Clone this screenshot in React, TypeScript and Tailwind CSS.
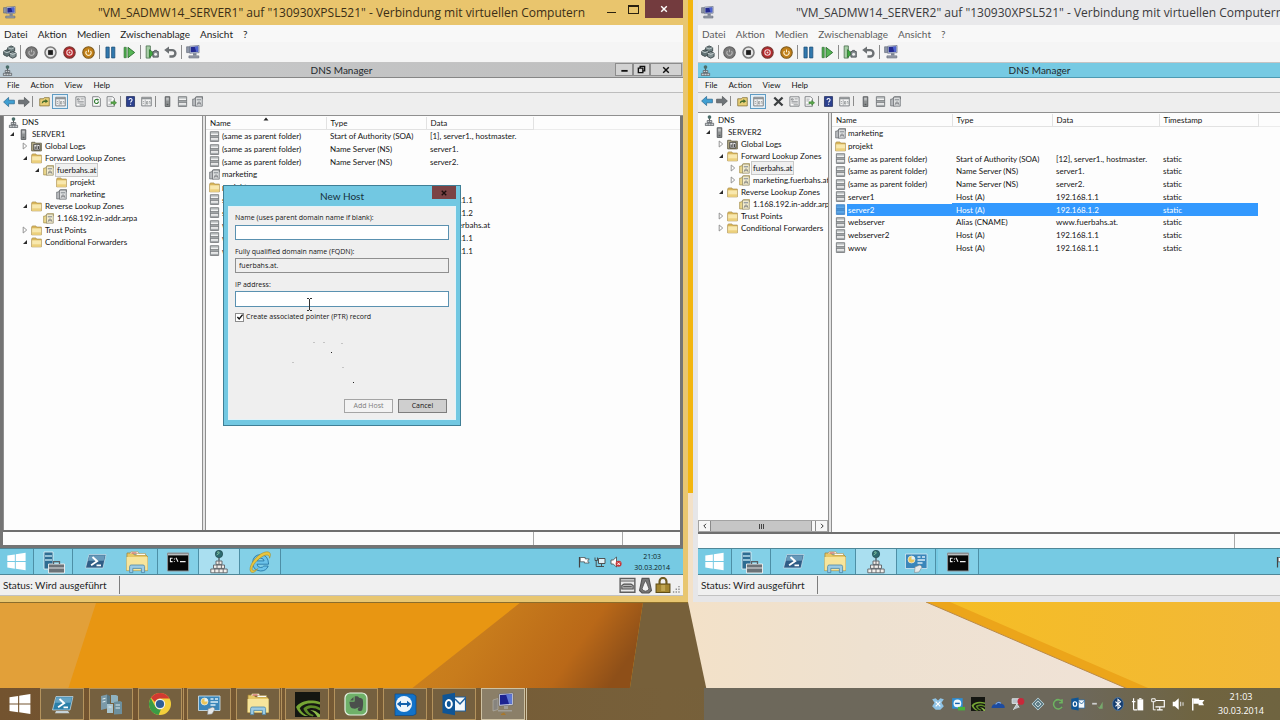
import type { ReactNode } from 'react';

/* ---------- small icons (12 x 12) ---------- */

function S({ children, size = 'size-[11px]' }: { children: ReactNode; size?: string }) {
  return (
    <svg viewBox="0 0 12 12" className={`${size} shrink-0`} aria-hidden="true">
      {children}
    </svg>
  );
}

function PcIcon({ size = 'size-[13px]' }: { size?: string }) {
  return (
    <S size={size}>
      <path d="M0.5 1.5h2.5v5H0.5z" fill="#8d96a8" stroke="#59606e" strokeWidth=".5" />
      <path d="M3.2 1l8-.6v6.2l-8 .5z" fill="#c9d2e4" stroke="#525c74" strokeWidth=".5" />
      <path d="M4 1.8l6.4-.5v4.500L4 6.300z" fill="#232a90" />
      <path d="M7.500 1.600l2.900-.3v4.500l-1.600.1z" fill="#4e63cf" />
      <path d="M6 7h3v2H6z" fill="#7c8596" />
      <path d="M2.500 9.300h8.500v1.800H2.500z" fill="#9aa1ad" stroke="#5a6170" strokeWidth=".5" />
    </S>
  );
}

function ServerTree() {
  return (
    <S size="size-[11px]">
      <circle cx="6" cy="2.300" r="2" fill="#4a6d6a" />
      <path d="M5.400 4h1.200v2H5.400z" fill="#555" />
      <path d="M3.500 6h5v2.200h-5zM1.500 9h9v2.600h-9z" fill="#c9cdcf" stroke="#555b60" strokeWidth=".8" />
      <path d="M6 6v2M4.500 9v2.500M7.500 9v2.500" stroke="#555b60" strokeWidth=".7" />
    </S>
  );
}

function Tower() {
  return (
    <S size="size-[11px]">
      <path d="M3.500.8h5v10.600h-5z" fill="#8e9192" stroke="#4d5052" strokeWidth=".9" />
      <path d="M4.600 2.500h2.800M4.600 4.200h2.800" stroke="#e1e3e4" strokeWidth=".9" />
      <path d="M5 8.500h2v1.500H5z" fill="#585b5c" />
    </S>
  );
}

function Folder() {
  return (
    <S size="size-[11px]">
      <path d="M.7 2.200L1.500 1h3.800l.9 1.200h5.100v8.600H.7z" fill="#d9b65a" stroke="#a8894a" strokeWidth=".7" />
      <path d="M1.200 3.600h9.700v6.800H1.200z" fill="#f8e8ae" />
      <path d="M1.200 8h9.700v2.400H1.200z" fill="#ecd07c" />
    </S>
  );
}

function Logs() {
  return (
    <S size="size-[11px]">
      <path d="M.7 1.400h3.600l.8 1h6.200v8.400H.7z" fill="#b9b08b" stroke="#5d5943" strokeWidth=".9" />
      <path d="M3 3.600h6.800v6.200H3z" fill="#e8e8e8" stroke="#333" strokeWidth=".9" />
      <path d="M4.600 8.800V6M6.400 8.800V4.800M8.200 8.800V5.600" stroke="#333" strokeWidth="1" />
    </S>
  );
}

function Zone({ grey = false }: { grey?: boolean }) {
  return (
    <S size="size-[11px]">
      <path d="M.7 3.400h2L3.400 2H5v8.800H.7z" fill={grey ? '#b9bcbf' : '#ecd98e'} stroke={grey ? '#6b6f73' : '#a48f4d'} strokeWidth=".8" />
      <path d="M3.800 1.200h7.400v9.900H3.800z" fill={grey ? '#dddfe0' : '#f5eecf'} stroke={grey ? '#63676b' : '#8f8867'} strokeWidth=".8" />
      <path d="M5 1.200V.5h6.500v3" fill="none" stroke={grey ? '#63676b' : '#a48f4d'} strokeWidth=".7" />
      <path d="M5.200 3.200h4.600v1.600H5.200z" fill="#9ba0a4" />
      <path d="M5.600 9.600l1.200-3h1.800l1.200 3M6.400 8.400h2.600" fill="none" stroke="#6d7175" strokeWidth=".8" />
    </S>
  );
}

function RecordIcon({ tint = false }: { tint?: boolean }) {
  return (
    <S size="size-[11px]">
      <path d="M1.500.8h9v10.600h-9z" fill={tint ? '#5fa9ea' : '#f1f2f2'} stroke={tint ? '#3b7fc2' : '#65696c'} strokeWidth=".9" />
      <path d="M2 1.400h8v1.200H2zM2 5.300h8v1.600H2zM2 9.600h8v1.300H2z" fill={tint ? '#4c93d6' : '#a5a9ab'} />
      <path d="M1.500 5h9M1.500 7.200h9" stroke={tint ? '#3b7fc2' : '#65696c'} strokeWidth=".8" />
    </S>
  );
}

/* ---------- VM toolbar icons ---------- */

const CtrlAltDel = () => (
  <S size="size-[14px]">
    <path d="M4 2.200L7 .8l3 1.400v3L7 6.600 4 5.200z" fill="#6f8082" stroke="#3c484a" strokeWidth=".8" />
    <path d="M.6 5.400l2.800-1.300 2.800 1.300v3L3.400 9.800.6 8.400z" fill="#627375" stroke="#3c484a" strokeWidth=".8" />
    <path d="M5.500 6.900l2.800-1.300 2.900 1.300v3l-2.900 1.400-2.800-1.400z" fill="#849294" stroke="#3c484a" strokeWidth=".8" />
    <path d="M4 2.200l3 1.200 3-1.200M.6 5.400l2.800 1.200 2.800-1.200M5.500 6.900l2.800 1.200 2.900-1.200" fill="none" stroke="#dfe6e6" strokeWidth=".6" />
  </S>
);
const PowerBall = ({ fill, ring, mark }: { fill: string; ring: string; mark: string }) => (
  <S size="size-[13px]">
    <circle cx="6" cy="6" r="5.300" fill={fill} stroke={ring} strokeWidth="1" />
    <path d="M4.200 4.600a2.400 2.400 0 1 0 3.600 0M6 3.200v2.600" fill="none" stroke={mark} strokeWidth="1" />
  </S>
);
const StopBall = () => (
  <S size="size-[13px]">
    <circle cx="6" cy="6" r="5.100" fill="#e4e4e4" stroke="#7b7b7b" strokeWidth="1.400" />
    <path d="M3.800 3.800h4.400v4.400H3.800z" fill="#1d1d1d" />
  </S>
);
const RedBall = () => (
  <S size="size-[13px]">
    <circle cx="6" cy="6" r="5.200" fill="#b5262b" stroke="#7c3a34" strokeWidth="1.200" />
    <circle cx="6" cy="6" r="2.500" fill="none" stroke="#f1d8d6" strokeWidth="1" />
    <circle cx="6" cy="6" r=".9" fill="#f1d8d6" />
  </S>
);
const Pause = () => (
  <S size="size-[13px]">
    <path d="M1.800 1h3v10h-3zM7 1h3v10H7z" fill="#3179ae" stroke="#1f4f78" strokeWidth=".7" />
  </S>
);
const Play = () => (
  <S size="size-[13px]">
    <path d="M1 1.200h2v9.600H1z" fill="#4cae4c" stroke="#2b6b2e" strokeWidth=".6" />
    <path d="M4.600 1.200L10.800 6l-6.200 4.800z" fill="#56b555" stroke="#2b6b2e" strokeWidth=".8" />
  </S>
);
const Checkpoint = () => (
  <S size="size-[14px]">
    <path d="M1 .8h3.600v10.400H1z" fill="#a8cfa7" stroke="#4c7050" strokeWidth=".7" />
    <path d="M3.800 4l4.400 3.300-4.400 3.300z" fill="#3fa83f" stroke="#256b28" strokeWidth=".6" />
    <path d="M6.800 5.600h4.600v4.800H6.800z" fill="#8b9296" stroke="#44494d" strokeWidth=".7" />
    <path d="M7.600 5.600l.6-1h1.800l.6 1" fill="#8b9296" stroke="#44494d" strokeWidth=".6" />
    <circle cx="9.100" cy="8" r="1.200" fill="#f2f2f2" />
  </S>
);
const Undo = () => (
  <S size="size-[13px]">
    <path d="M3 3.800h4.600a2.900 2.900 0 0 1 0 5.900H5" fill="none" stroke="#6c7073" strokeWidth="2.200" />
    <path d="M.2 3.800L4.600.4v6.800z" fill="#6c7073" />
  </S>
);

/* ---------- console toolbar icons ---------- */

const Arrow = ({ back = false }: { back?: boolean }) => (
  <S size="size-[12px]">
    {back ? (
      <path d="M.6 6L5.600 1.400v2.800h5.800v3.600H5.600v2.800z" fill="#3f9fd2" stroke="#22648e" strokeWidth=".7" />
    ) : (
      <path d="M11.400 6L6.400 1.400v2.800H.6v3.600h5.800v2.800z" fill="#6f7478" stroke="#4b4f52" strokeWidth=".7" />
    )}
  </S>
);
const UpFolder = () => (
  <S>
    <path d="M.8 3h4l1-1.200h5.400v9H.8z" fill="#e9cf78" stroke="#7e6b30" strokeWidth=".8" />
    <path d="M3 8.500c0-3 1.500-3.800 4-3.800V3.200l3 2.400-3 2.300V6.500c-1.600 0-2.600.4-4 2z" fill="#466d2d" />
  </S>
);
const Panel = () => (
  <S>
    <path d="M.8 1.400h10.400v9.400H.8z" fill="#f4f4f4" stroke="#6b6f72" strokeWidth=".9" />
    <path d="M.8 2h10.400v1.600H.8z" fill="#8f9396" />
    <path d="M4.600 4v6.600" stroke="#8f9396" strokeWidth=".7" />
    <path d="M2 6h1.400M2 8h1.400M6 6h1.400v2.800H6zM8.800 6h1v2.800" stroke="#7a7e81" strokeWidth=".7" fill="none" />
  </S>
);
const Props = () => (
  <S>
    <path d="M1 .9h10v10.200H1z" fill="#fafafa" stroke="#6c7073" strokeWidth=".9" />
    <path d="M2.600 3h2v1.400h-2zM6 3.200h3.600M2.600 5.800h7M2.600 7.600h7M5 9.600h4.800" stroke="#6f7376" strokeWidth=".8" fill="none" />
  </S>
);
const Delete = () => (
  <S>
    <path d="M1.400 1.600l9 8.800M10.400 1.600l-9 8.800" stroke="#3b3e40" strokeWidth="2.500" />
  </S>
);
const Refresh = () => (
  <S>
    <path d="M1.800.8h6.400l2 2v8.400H1.800z" fill="#fbfbfb" stroke="#6c7073" strokeWidth=".9" />
    <path d="M8.200 6a2.200 2.200 0 1 1-1-1.900" fill="none" stroke="#2f7a30" strokeWidth="1.200" />
    <path d="M6.600 2.800l2.200 1-1.600 1.800z" fill="#2f7a30" />
  </S>
);
const Export = () => (
  <S>
    <path d="M1.200.8h6l2 2v8.400h-8z" fill="#fbfbfb" stroke="#6c7073" strokeWidth=".9" />
    <path d="M2.600 3.400h3.600M2.600 5.400h3M2.600 9h3.600" stroke="#8c9093" strokeWidth=".8" />
    <path d="M5.400 6.400h3V4.800l3.200 2.600-3.200 2.600V8.400h-3z" fill="#57a746" stroke="#2f6d29" strokeWidth=".5" />
  </S>
);
const Help = () => (
  <S>
    <path d="M1.600.6h8.800v10.800H1.600z" fill="#2c418f" stroke="#1b2858" strokeWidth=".8" />
    <path d="M4.400 4.400c0-2.200 3.300-2.200 3.300 0 0 1.400-1.600 1.400-1.600 2.800M6.100 8.400v1.200" fill="none" stroke="#fff" strokeWidth="1.200" />
  </S>
);

function Sep() {
  return (
    <span className="flex w-[3px] shrink-0 justify-center self-stretch py-[3px]">
      <span className="w-px bg-[#8b8b8b]" />
    </span>
  );
}

function Tool({ label, children, w = 'w-4', on = false }: { label: string; children: ReactNode; w?: string; on?: boolean }) {
  return (
    <button
      type="button"
      aria-label={label}
      className={`flex h-[15px] shrink-0 items-center justify-center ${w} ${on ? 'border border-[#5f9cc4] bg-[#e3eff7]' : ''}`}
    >
      {children}
    </button>
  );
}

/* ---------- large icons (24 x 24) ---------- */

function L({ children, size = 'size-[24px]' }: { children: ReactNode; size?: string }) {
  return (
    <svg viewBox="0 0 24 24" className={`${size} shrink-0`} aria-hidden="true">
      {children}
    </svg>
  );
}
const WinLogo = ({ size = 'size-[24px]' }: { size?: string }) => (
  <L size={size}>
    <path d="M1.500 5.200l8.600-1.300v7.600H1.500zM11.200 3.700L22.400 2v9.500H11.200zM1.500 12.600h8.600v7.600l-8.600-1.300zM11.200 12.600h11.200V22l-11.200-1.700z" fill="#fff" />
  </L>
);
const ServerManager = () => (
  <L>
    <path d="M3 2h9v17H3z" fill="#2d6c92" stroke="#e9f4f8" strokeWidth=".8" />
    <path d="M4 6h7M4 10h7" stroke="#b7dceb" strokeWidth="1.300" />
    <path d="M7.500 14h16v9h-16z" fill="#6c7277" stroke="#f2f2f2" strokeWidth=".9" />
    <path d="M12.500 14v-2.300h6V14" fill="none" stroke="#5a6065" strokeWidth="1.300" />
    <path d="M8 18h15" stroke="#e2e4e6" strokeWidth="1" />
  </L>
);
const PowerShell = ({ screen = false }: { screen?: boolean }) => (
  <L>
    <path d="M6 4.500h17L20 18H2.500z" fill={screen ? '#2b7fa8' : '#2f5d86'} stroke="#cfe2ee" strokeWidth=".7" />
    <path d="M6.500 5.200h15.500l-1.400 5.500H5z" fill="#7fb4d0" opacity=".7" />
    {screen && <path d="M6 19h12l1.500 2.200H5z" fill="#c6d3d9" />}
    <path d="M9.500 7l4.600 4.200-6 4M13.500 15.400h4.500" fill="none" stroke="#fff" strokeWidth="1.900" />
  </L>
);
const Explorer = () => (
  <L>
    <path d="M2 3h6l1.400 2H21l1.500 1.600v14H1.600z" fill="#e6c766" stroke="#9c7f34" strokeWidth=".7" />
    <path d="M5 3.400l1-1.600h7l1 1.600M11 5l.5-1.400h9V5" fill="#fff" stroke="#a98d43" strokeWidth=".6" />
    <path d="M6.500 3h5" stroke="#cf4a3d" strokeWidth="1" />
    <path d="M1.600 7h21v13.400h-21z" fill="#f7e59c" />
    <path d="M4.600 22.600v-6q0-1.600 1.600-1.600H18q1.600 0 1.600 1.600v6h-3.200v-4.200H7.800v4.200z" fill="#9ccbe4" stroke="#4c87a8" strokeWidth=".8" />
  </L>
);
const Cmd = () => (
  <L>
    <path d="M1.600 3h21v18h-21z" fill="#060606" stroke="#8d9295" strokeWidth="1" />
    <path d="M2 3.400h20.200v2H2z" fill="#b9bdbf" />
    <path d="M6.600 8.200H4.400v3.400h2.200M8.400 8.600v.8M8.400 11v.8M10 7.800l2 4M14 11.600h5.600" fill="none" stroke="#f0f0f0" strokeWidth="1.100" />
  </L>
);
const DnsBig = () => (
  <L>
    <circle cx="12" cy="4" r="3.700" fill="#2e6b70" stroke="#173f44" strokeWidth=".6" />
    <path d="M10 2.600c1.400-1.200 2.600-.6 2 .6s-2 1-2.400 2" fill="none" stroke="#8fd1a8" strokeWidth="1" />
    <path d="M11.400 7.800h1.200v3h-1.200z" fill="#454a4e" />
    <path d="M9 11h6v3.400H9zM6.500 15h11v3.400h-11zM3.800 19h16.400v3.800H3.800z" fill="#f2efec" stroke="#5d6165" strokeWidth=".9" />
    <path d="M12 11v3.400M10 15v3.400M14.400 15v3.400M7.800 19v3.800M12 19v3.800M16.200 19v3.800" stroke="#5d6165" strokeWidth=".9" />
  </L>
);
const InternetExplorer = () => (
  <L>
    <path d="M20.600 14.200H9q.4 3.300 3.600 3.300 2.200 0 3.200-1.500h4.400q-1.800 5-7.600 5-7.800-.5-8-8.300Q5 4.900 12.600 4.600q7.700.3 8 9.600zM9.100 10.900h7q-.5-2.700-3.500-2.700-2.900 0-3.500 2.700z" fill="#6cc3ea" stroke="#1e6f9f" strokeWidth=".8" />
    <path d="M3.600 22.300C-.4 20.300 3.500 11 10.500 5.500 16.400.9 22.800.4 22.400 5.200c-.1 1-.4 2-.9 3 .2-3.700-3-4.200-7.900-1.200C6.500 11.500 2.400 19.100 4.700 20.200c1.300.6 3.400-.3 5.100-1.600-2 2.700-4.400 4.500-6.200 3.700z" fill="#e8c53f" stroke="#9d8121" strokeWidth=".5" />
  </L>
);
const ControlPanel = () => (
  <L>
    <path d="M1.500 4h21.500v14.500H1.500z" fill="#3a86ba" stroke="#d6e9f3" strokeWidth=".8" />
    <circle cx="7.500" cy="9.500" r="3.500" fill="#e9c65b" stroke="#fff" strokeWidth=".6" />
    <path d="M7.500 9.500V6a3.500 3.500 0 0 1 3.500 3.500z" fill="#dff1fa" />
    <path d="M13.500 7h3M18 7h3M13.500 10h7.500M13.500 13h5" stroke="#d9edf7" strokeWidth="1.400" />
    <path d="M11 17l5-2 2 2-3 5-4.500.5z" fill="#e7e9ea" stroke="#85898c" strokeWidth=".6" />
  </L>
);
const HyperV = () => (
  <L>
    <path d="M2 4l6-1.500v14L2 18z" fill="#7b9aa8" />
    <path d="M8 2.500l3 1.500v13l-3-.5z" fill="#577683" />
    <path d="M12 3h5l2 1v7h-7z" fill="#8fb2bf" />
    <path d="M8 12h6v9H8z" fill="#a9c5cf" />
    <path d="M15 10l6-1 2 1v12l-8 .5z" fill="#6d909e" />
    <path d="M3.500 7l3-.7M3.500 10l3-.7M16.500 13h4.500M16.500 16h4.500M9.500 15h3" stroke="#dcebf0" strokeWidth="1" />
  </L>
);
const Chrome = () => (
  <L>
    <circle cx="12" cy="12" r="11" fill="#f3cf3b" />
    <path d="M12 1a11 11 0 0 1 9.600 5.600H12a5.400 5.400 0 0 0-5 3.500L3 5.700A11 11 0 0 1 12 1z" fill="#d13a32" />
    <path d="M2.700 6L7.300 14.600A5.400 5.400 0 0 0 13 17.300L10.600 22.900A11 11 0 0 1 2.700 6z" fill="#3b9b46" />
    <circle cx="12" cy="12" r="5.200" fill="#f2f2f2" />
    <circle cx="12" cy="12" r="4.100" fill="#2f5f96" />
  </L>
);
const Nvidia = ({ size = 'size-[25px]' }: { size?: string }) => (
  <L size={size}>
    <path d="M0 0h24v24H0z" fill="#141611" />
    <path d="M1 14.500C5 8.500 14 6.500 24 9.500V12C15 9.500 8 11 4.500 15.500c1.500 4 5 6.500 8.500 7.500H9C5.500 21.500 2.500 18.500 1 14.500z" fill="#76a534" />
    <path d="M8 16c2.500-3.500 8.500-4.500 16-1v2.800c-5-3-9.500-3-12.500-1 1 2.500 3.500 4.500 6.500 5.200l-1 1.500c-4.500-1-7.500-3.700-9-7.500z" fill="#5d8a27" />
    <path d="M14.500 17.500c3.500-.5 6 1 9.500 4V24h-2.500c-1.500-3-4-5.500-7-6.500z" fill="#8dbb4a" />
  </L>
);
const Evernote = () => (
  <L>
    <rect x="1" y="1" width="22" height="22" rx="5" fill="#6fb069" stroke="#e6f2e3" strokeWidth="1.200" />
    <path d="M9.500 5v3.500H6L9.500 5zm1.200-.5c2-.4 3.800.1 4.300 1.200 2.500.3 3.500.7 3.800 2 .6 3 .3 7-.5 10-.5 1.700-3.800 1.700-4.400.3-.4-1.500.2-2.500 2.200-2.300-1.200-.5-2-.4-3.100.3-1.500 1-3 .6-5 .2C6 15.500 5.600 12 5.400 9.800h4.300c.8 0 1-.4 1-1.100z" fill="#4b4f4c" />
  </L>
);
const TeamViewer = () => (
  <L>
    <path d="M2 2h18l3 2v18l-3 1.500H2z" fill="#1272c8" stroke="#0b4a8b" strokeWidth=".7" />
    <circle cx="11" cy="12" r="8" fill="#eef5fb" />
    <path d="M3.800 12L8 8.800v2.200h6V8.800l4.200 3.200-4.200 3.200V13H8v2.200z" fill="#1361ad" />
  </L>
);
const Outlook = ({ size = 'size-[24px]' }: { size?: string }) => (
  <L size={size}>
    <path d="M12 5h11.500v14H12z" fill="#f4f8fb" stroke="#1d5f9e" strokeWidth="1.200" />
    <path d="M13 7l5 5 5.500-6" fill="none" stroke="#1d5f9e" strokeWidth="1.500" />
    <path d="M.5 3L13 .8v22.400L.5 21z" fill="#0f5596" />
    <ellipse cx="6.800" cy="12" rx="3" ry="3.900" fill="none" stroke="#fff" strokeWidth="2" />
  </L>
);
const VmConnect = () => (
  <L>
    <path d="M2 8l5-1.500v11L2 19z" fill="#87847e" stroke="#b8b5ad" strokeWidth=".6" />
    <path d="M8 2l14-1v12l-14 1z" fill="#d8dced" stroke="#55586e" strokeWidth=".5" />
    <path d="M9 3l12-.8v9.600L9 12.700z" fill="#1d2390" />
    <path d="M15 2.600l6-.4v9.600l-3 .2z" fill="#5c76d4" />
    <path d="M13 14h4v3h-4zM7 18h14v1.500H7z" fill="#a09d95" />
    <path d="M10 22l3-1.500 2 2.500h-5z" fill="#a8772c" />
  </L>
);

/* ---------- tree ---------- */

type Node = { level: 0 | 1 | 2 | 3 | 4; label: string; icon: ReactNode; open?: boolean; closed?: boolean; selected?: boolean };

const PAD = ['pl-[3px]', 'pl-[3px]', 'pl-4', 'pl-7', 'pl-[41px]'];

function Tree({ nodes }: { nodes: Node[] }) {
  return (
    <ul className="text-[8px] leading-3 text-[#141414]">
      {nodes.map((n, i) => (
        <li key={i} className={`flex h-3 items-center whitespace-nowrap ${PAD[n.level]}`}>
          {n.level > 0 && (
            <span className="flex w-[10px] shrink-0 justify-center">
              {n.open && (
                <svg viewBox="0 0 6 6" className="size-[6px]" aria-hidden="true">
                  <path d="M5 1v4H1z" fill="#2b2b2b" />
                </svg>
              )}
              {n.closed && (
                <svg viewBox="0 0 6 8" className="h-2 w-[6px]" aria-hidden="true">
                  <path d="M1.200 1l3.500 3-3.500 3z" fill="#fff" stroke="#8a8a8a" strokeWidth=".9" />
                </svg>
              )}
            </span>
          )}
          <span className="flex w-3 shrink-0 justify-center">{n.icon}</span>
          <span className={`ml-[2px] px-px ${n.selected ? 'bg-[#f0f0f0] outline outline-[#c9c9c9]' : ''}`}>{n.label}</span>
        </li>
      ))}
    </ul>
  );
}

const TREE1: Node[] = [
  { level: 0, label: 'DNS', icon: <ServerTree /> },
  { level: 1, label: 'SERVER1', icon: <Tower />, open: true },
  { level: 2, label: 'Global Logs', icon: <Logs />, closed: true },
  { level: 2, label: 'Forward Lookup Zones', icon: <Folder />, open: true },
  { level: 3, label: 'fuerbahs.at', icon: <Zone />, open: true, selected: true },
  { level: 4, label: 'projekt', icon: <Folder /> },
  { level: 4, label: 'marketing', icon: <Zone grey /> },
  { level: 2, label: 'Reverse Lookup Zones', icon: <Folder />, open: true },
  { level: 3, label: '1.168.192.in-addr.arpa', icon: <Zone /> },
  { level: 2, label: 'Trust Points', icon: <Folder />, closed: true },
  { level: 2, label: 'Conditional Forwarders', icon: <Folder />, open: true },
];

const TREE2: Node[] = [
  { level: 0, label: 'DNS', icon: <ServerTree /> },
  { level: 1, label: 'SERVER2', icon: <Tower />, open: true },
  { level: 2, label: 'Global Logs', icon: <Logs />, closed: true },
  { level: 2, label: 'Forward Lookup Zones', icon: <Folder />, open: true },
  { level: 3, label: 'fuerbahs.at', icon: <Zone />, closed: true, selected: true },
  { level: 3, label: 'marketing.fuerbahs.at', icon: <Zone />, closed: true },
  { level: 2, label: 'Reverse Lookup Zones', icon: <Folder />, open: true },
  { level: 3, label: '1.168.192.in-addr.arpa', icon: <Zone /> },
  { level: 2, label: 'Trust Points', icon: <Folder />, closed: true },
  { level: 2, label: 'Conditional Forwarders', icon: <Folder />, closed: true },
];

/* ---------- record list ---------- */

type Rec = { name: string; type?: string; data?: string; time?: string; kind?: 'zone' | 'folder'; selected?: boolean };

const LIST1: Rec[] = [
  { name: '(same as parent folder)', type: 'Start of Authority (SOA)', data: '[1], server1., hostmaster.' },
  { name: '(same as parent folder)', type: 'Name Server (NS)', data: 'server1.' },
  { name: '(same as parent folder)', type: 'Name Server (NS)', data: 'server2.' },
  { name: 'marketing', kind: 'zone' },
  { name: 'projekt', kind: 'folder' },
  { name: 'server1', type: 'Host (A)', data: '192.168.1.1' },
  { name: 'server2', type: 'Host (A)', data: '192.168.1.2' },
  { name: 'webserver', type: 'Alias (CNAME)', data: 'www.fuerbahs.at' },
  { name: 'webserver2', type: 'Host (A)', data: '192.168.1.1' },
  { name: 'www', type: 'Host (A)', data: '192.168.1.1' },
];

const LIST2: Rec[] = [
  { name: 'marketing', kind: 'zone' },
  { name: 'projekt', kind: 'folder' },
  { name: '(same as parent folder)', type: 'Start of Authority (SOA)', data: '[12], server1., hostmaster.', time: 'static' },
  { name: '(same as parent folder)', type: 'Name Server (NS)', data: 'server1.', time: 'static' },
  { name: '(same as parent folder)', type: 'Name Server (NS)', data: 'server2.', time: 'static' },
  { name: 'server1', type: 'Host (A)', data: '192.168.1.1', time: 'static' },
  { name: 'server2', type: 'Host (A)', data: '192.168.1.2', time: 'static', selected: true },
  { name: 'webserver', type: 'Alias (CNAME)', data: 'www.fuerbahs.at.', time: 'static' },
  { name: 'webserver2', type: 'Host (A)', data: '192.168.1.1', time: 'static' },
  { name: 'www', type: 'Host (A)', data: '192.168.1.1', time: 'static' },
];

function RecordTable({ rows, timestamps }: { rows: Rec[]; timestamps: boolean }) {
  const th = 'border-r border-b border-[#e2e2e2] py-0 pl-1 text-left font-normal';
  return (
    <table className="h-[140px] w-full table-fixed border-collapse text-[8px] leading-3 text-[#141414]">
      <colgroup>
        <col className="w-[120px]" />
        <col className="w-[100px]" />
        <col className="w-[107px]" />
        {timestamps && <col className="w-[99px]" />}
        <col />
      </colgroup>
      <thead>
        <tr>
          <th scope="col" className={th}>
            <span className="flex items-start">
              Name
              {!timestamps && (
                <svg viewBox="0 0 6 4" className="ml-8 h-1 w-[6px]" aria-hidden="true">
                  <path d="M3 .5L5.500 3.500h-5z" fill="#222" />
                </svg>
              )}
            </span>
          </th>
          <th scope="col" className={th}>Type</th>
          <th scope="col" className={th}>Data</th>
          {timestamps && <th scope="col" className={th}>Timestamp</th>}
          <td className="border-b border-[#ececec] p-0" />
        </tr>
      </thead>
      <tbody>
        {rows.map((r, i) => {
          const cell = `p-0 pl-1 whitespace-nowrap ${r.selected ? 'bg-[#3399fe] text-white' : ''}`;
          return (
            <tr key={i}>
              <td className="p-0 pl-[3px] whitespace-nowrap">
                <span className="flex items-center">
                  {r.kind === 'zone' ? <Zone grey /> : r.kind === 'folder' ? <Folder /> : <RecordIcon tint={r.selected} />}
                  <span className={`ml-px flex-1 pl-px ${r.selected ? 'bg-[#3399fe] text-white' : ''}`}>{r.name}</span>
                </span>
              </td>
              <td className={cell}>{r.type}</td>
              <td className={cell}>{r.data}</td>
              {timestamps && <td className={cell}>{r.time}</td>}
              <td className="p-0" />
            </tr>
          );
        })}
      </tbody>
    </table>
  );
}

/* ---------- dialog ---------- */

function NewHostDialog() {
  return (
    <section
      role="dialog"
      aria-label="New Host"
      className="absolute top-[122px] left-[223px] flex h-[241px] w-[238px] flex-col border border-[#3f7f96] bg-[#72c8e2] px-1 pb-[5px]"
    >
      <header className="relative flex h-5 shrink-0 items-center justify-center">
        <h2 className="font-['Lato'] text-[10px] leading-3 text-[#16303a]">New Host</h2>
        <button type="button" aria-label="Close" className="absolute top-0 right-0 flex h-[13px] w-6 items-center justify-center bg-[#7b4345]">
          <svg viewBox="0 0 8 8" className="size-[6px]" aria-hidden="true">
            <path d="M1 1l6 6M7 1L1 7" stroke="#1d0e0e" strokeWidth="1.800" />
          </svg>
        </button>
      </header>
      <form className="relative flex flex-1 flex-col border border-[#e3f3f8] bg-[#efefef] px-[6px] pt-[6px] font-['Open_Sans'] text-[7px] leading-[10px] text-[#141414]">
        <label htmlFor="host-name">Name (uses parent domain name if blank):</label>
        <input id="host-name" className="mt-[2px] h-[15px] w-full border border-[#5a91b0] bg-white px-[3px] outline-none" />
        <label htmlFor="host-fqdn" className="mt-[7px]">Fully qualified domain name (FQDN):</label>
        <input id="host-fqdn" readOnly value="fuerbahs.at." className="mt-px h-[15px] w-full border border-[#8f8f8f] bg-[#efefef] px-[3px] outline-none" />
        <label htmlFor="host-ip" className="mt-[7px]">IP address:</label>
        <input id="host-ip" className="mt-px h-4 w-full border border-[#5a91b0] bg-white px-[3px] outline-none" />
        <label className="mt-[5px] flex items-center gap-[2px]">
          <span className="grid size-[9px] place-items-center">
            <input type="checkbox" defaultChecked className="col-start-1 row-start-1 size-[9px] appearance-none border border-[#8c8c8c] bg-white" />
            <svg viewBox="0 0 8 8" className="pointer-events-none col-start-1 row-start-1 size-2" aria-hidden="true">
              <path d="M1.400 4l1.800 2L6.600 1.600" fill="none" stroke="#111" strokeWidth="1.400" />
            </svg>
          </span>
          Create associated pointer (PTR) record
        </label>
        <svg viewBox="0 0 120 90" className="pointer-events-none absolute top-[90px] left-[60px] h-[90px] w-[120px]" aria-hidden="true">
          <path d="M42 55h1v1h-1zM64 85h1v1h-1z" fill="#222" />
          <path d="M24.500 45.500h1M34.500 45.500h1M52.500 46.500h1M3.500 65.500h1M53.500 70.500h1" stroke="#999" strokeWidth="1" />
        </svg>
        <div className="mt-auto mb-[6px] flex justify-end gap-[5px] pr-[2px]">
          <button type="button" disabled className="h-[14px] w-[49px] border border-[#a5a5a5] bg-[#f3f3f3] text-[#7d7d7d]">Add Host</button>
          <button type="button" className="h-[14px] w-[49px] border border-[#7d7d7d] bg-[#cfcfcf]">Cancel</button>
        </div>
      </form>
    </section>
  );
}

/* ---------- virtual machine window ---------- */

function MmcButtons() {
  const b = 'flex h-[13px] items-center justify-center border border-[#8d8d8d] bg-[#d2d2d2]';
  return (
    <div className="absolute top-0 right-px flex">
      <button type="button" aria-label="Minimize console" className={`${b} w-[18px]`}>
        <svg viewBox="0 0 10 10" className="size-[9px]" aria-hidden="true"><path d="M1.500 6.500h7" stroke="#111" strokeWidth="2" /></svg>
      </button>
      <button type="button" aria-label="Restore console" className={`${b} w-[17px]`}>
        <svg viewBox="0 0 10 10" className="size-[9px]" aria-hidden="true">
          <path d="M3.500 3V1.500h5v5H7M1.500 3.500h5v5h-5z" fill="none" stroke="#111" strokeWidth="1.500" />
        </svg>
      </button>
      <button type="button" aria-label="Close console" className={`${b} w-8`}>
        <svg viewBox="0 0 10 10" className="size-2" aria-hidden="true"><path d="M1.500 1.500l7 7M8.500 1.500l-7 7" stroke="#111" strokeWidth="1.800" /></svg>
      </button>
    </div>
  );
}

function VmTaskbar({ second }: { second: boolean }) {
  const b = 'flex h-full shrink-0 items-center justify-center border-r border-[#4d8fa6]';
  return (
    <nav className="flex h-[27px] shrink-0 items-center border-y border-[#4f8798] bg-[#76cae3]">
      <button type="button" aria-label="Start" className={`${b} w-[34px]`}><WinLogo size="size-[21px]" /></button>
      <button type="button" aria-label="Server Manager" className={`${b} w-[39px] bg-[#83d0e7]`}><ServerManager /></button>
      <button type="button" aria-label="PowerShell" className="flex h-full w-11 shrink-0 items-center justify-center bg-[#80cee6]"><PowerShell /></button>
      <button type="button" aria-label="File Explorer" className={`${b} w-[41px] bg-[#80cee6]`}><Explorer /></button>
      {!second && <button type="button" aria-label="Command Prompt" className={`${b} w-[41px] bg-[#83d0e7]`}><Cmd /></button>}
      <button type="button" aria-label="DNS" className={`${b} w-[41px] bg-[#aadff0]`}><DnsBig /></button>
      {!second && <button type="button" aria-label="Internet Explorer" className={`${b} w-[41px] bg-[#83d0e7]`}><InternetExplorer /></button>}
      {second && <button type="button" aria-label="Control Panel" className={`${b} w-[39px] bg-[#83d0e7]`}><ControlPanel /></button>}
      {second && <button type="button" aria-label="Command Prompt" className={`${b} ml-[2px] w-[41px] bg-[#83d0e7]`}><Cmd /></button>}
      <div className="ml-auto flex items-center gap-1 pr-[13px]">
        <S size="size-[12px]">
          <path d="M1.500 1v10.500" stroke="#444" strokeWidth="1.200" />
          <path d="M2.200 1.500h5v1.400h4L9.600 5l1.600 2H6.400V5.800H2.200z" fill="#fff" stroke="#444" strokeWidth=".7" />
        </S>
        <S size="size-[12px]">
          <path d="M4.500 2.500h6.500v5H4.500z" fill="#dff0f6" stroke="#444" strokeWidth=".9" />
          <path d="M1 1.500v3h2.500v-3M2.200 4.500v6h4M7.500 8v2.500M5.500 10.500h4.500" fill="none" stroke="#444" strokeWidth=".9" />
        </S>
        <S size="size-[12px]">
          <path d="M1 4h2.200L6.500 1v10L3.200 8H1z" fill="#fff" stroke="#444" strokeWidth=".8" />
          <circle cx="8.600" cy="7.800" r="3" fill="#c6373a" />
          <path d="M7.400 6.600l2.400 2.400M9.800 6.600L7.400 9" stroke="#fff" strokeWidth="1" />
        </S>
        <time className="ml-2 text-center font-['Open_Sans'] text-[7px] leading-[11px] text-[#0d1f26]">
          21:03
          <br />
          30.03.2014
        </time>
      </div>
    </nav>
  );
}

function VmWindow({ second = false }: { second?: boolean }) {
  const n = second ? 2 : 1;
  const frame = second ? 'left-[693px] border-[#e6e6e8] bg-[#e9e9eb]' : '-left-[5px] border-[#e8c670] bg-[#e9c56d] shadow-[0_1px_0_#8a6d2c]';
  return (
    <section className={`absolute top-0 flex h-[602px] w-[693px] flex-col border-x-[5px] border-b-[6px] ${frame}`}>
      <header className="relative flex h-[25px] shrink-0 items-center justify-center">
        <span className="absolute left-[3px]"><PcIcon /></span>
        <h1 className={`font-['Open_Sans'] text-[12px] leading-4 whitespace-nowrap ${second ? 'text-[#3a3a3c]' : 'text-[#3b2e16]'}`}>
          "VM_SADMW14_SERVER{n}" auf "130930XPSL521" - Verbindung mit virtuellen Computern
        </h1>
        <div className="absolute top-0 right-0 flex items-start">
          <button type="button" aria-label="Minimize" className="flex h-[18px] w-[22px] items-end justify-center pb-[5px]"><span className="h-px w-[9px] bg-[#2a2110]" /></button>
          <button type="button" aria-label="Maximize" className="flex h-[18px] w-[23px] items-center justify-center"><span className="h-[9px] w-[11px] border border-t-2 border-[#2a2110]" /></button>
          <button type="button" aria-label="Close" className="flex h-[18px] w-[38px] items-center justify-center bg-[#733b3e]">
            <svg viewBox="0 0 10 10" className="size-2" aria-hidden="true"><path d="M1.500 1.500l7 7M8.500 1.500l-7 7" stroke="#fff" strokeWidth="1.800" /></svg>
          </button>
        </div>
      </header>

      <nav className={`flex h-[17px] shrink-0 items-center gap-[10px] bg-[#f8f8f8] px-1 font-['Lato'] text-[10px] leading-4 ${second ? 'text-[#5c5c5c]' : 'text-[#1f1f1f]'}`}>
        {['Datei', 'Aktion', 'Medien', 'Zwischenablage', 'Ansicht', '?'].map((m) => (
          <button type="button" key={m}>{m}</button>
        ))}
      </nav>

      <div className="flex h-[21px] shrink-0 items-center border-b border-[#c4c4c4] bg-[#f5f5f5]">
        <Tool label="Ctrl+Alt+Del" w="w-[19px]"><CtrlAltDel /></Tool>
        <Sep />
        <Tool label="Start machine" w="w-[19px]"><PowerBall fill="#7a7a7a" ring="#5f5f5f" mark="#b5b5b5" /></Tool>
        <Tool label="Turn off" w="w-[19px]"><StopBall /></Tool>
        <Tool label="Shut down" w="w-[19px]"><RedBall /></Tool>
        <Tool label="Save" w="w-[19px]"><PowerBall fill="#c07f18" ring="#7e5a1c" mark="#fbeecb" /></Tool>
        <Sep />
        <Tool label="Pause" w="w-[19px]"><Pause /></Tool>
        <Tool label="Reset" w="w-[19px]"><Play /></Tool>
        <Sep />
        <Tool label="Checkpoint" w="w-[19px]"><Checkpoint /></Tool>
        <Tool label="Revert" w="w-[19px]"><Undo /></Tool>
        <Sep />
        <Tool label="Enhanced session" w="w-[19px]"><PcIcon size="size-[14px]" /></Tool>
      </div>

      <main className="relative flex min-h-0 flex-1 flex-col bg-[#efefef] font-['Lato']">
        <header
          className={`relative flex h-[15px] shrink-0 items-center justify-center border-b ${
            second ? 'border-[#4d9ab2] bg-[#76cae3]' : 'border-[#868686] bg-linear-to-r from-[#bccbd5] via-[#c6c7c8] via-30% to-[#bebebe]'
          }`}
        >
          <span className="absolute left-[2px]"><ServerTree /></span>
          <h2 className="text-[10px] leading-3 text-[#23292c]">DNS Manager</h2>
          <MmcButtons />
        </header>
        <nav className="flex h-[15px] shrink-0 items-center gap-[11px] border-b border-[#bdbdbd] bg-[#f1f1f1] px-[7px] text-[8px] leading-3 text-[#141414]">
          {['File', 'Action', 'View', 'Help'].map((m) => (
            <button type="button" key={m}>{m}</button>
          ))}
        </nav>
        <div className={`flex shrink-0 items-center border-b border-[#8f8f8f] bg-[#eeeeee] pl-px ${second ? 'h-5 pb-[3px]' : 'h-[23px] pb-[5px]'}`}>
          <Tool label="Back" w="w-[15px]"><Arrow back /></Tool>
          <Tool label="Forward" w="w-[15px]"><Arrow /></Tool>
          <Sep />
          <span className="w-[2px]" />
          <Tool label="Up"><UpFolder /></Tool>
          <Tool label="Console tree" on><Panel /></Tool>
          <span className="w-1" />
          {second ? <Tool label="Delete"><Delete /></Tool> : <Tool label="Properties"><Props /></Tool>}
          {second ? <Tool label="Properties"><Props /></Tool> : <Tool label="Refresh"><Refresh /></Tool>}
          <Tool label="Export" w="w-[15px]"><Export /></Tool>
          <Sep />
          <Tool label="Help"><Help /></Tool>
          <Tool label="Action pane"><Panel /></Tool>
          <Sep />
          <span className="w-[3px]" />
          <Tool label="New server" w="w-[15px]"><Tower /></Tool>
          <Tool label="New record" w="w-[15px]"><RecordIcon /></Tool>
          <Tool label="Filter" w="w-[15px]"><Zone grey /></Tool>
        </div>

        <div className={`flex min-h-0 flex-1 flex-col ${second ? '' : 'bg-[#747474] px-[3px] pb-[3px]'}`}>
          <div className="flex min-h-0 flex-1 gap-[2px] bg-[#e4e4e4]">
            <div className={`flex shrink-0 flex-col overflow-hidden border-r border-[#8f8f8f] bg-[#fdfdfd] ${second ? 'w-[131px]' : 'w-[200px] border-l'}`}>
              <div className={`flex-1 overflow-hidden ${second ? 'pt-px pl-[2px]' : ''}`}><Tree nodes={second ? TREE2 : TREE1} /></div>
              {second && (
                <div className="flex h-3 shrink-0 border border-[#a3a3a3] bg-[#f6f6f6]">
                  <button type="button" aria-label="Scroll left" className="flex w-3 items-center justify-center border-r border-[#8a8a8a]">
                    <svg viewBox="0 0 6 6" className="size-[6px]" aria-hidden="true"><path d="M4 .8L1.800 3 4 5.200" fill="none" stroke="#333" /></svg>
                  </button>
                  <span className="flex w-[101px] items-center justify-center gap-px border-r border-[#8a8a8a] bg-[#c6c6c6]">
                    <span className="h-[5px] w-px bg-[#444]" />
                    <span className="h-[5px] w-px bg-[#444]" />
                    <span className="h-[5px] w-px bg-[#444]" />
                  </span>
                  <button type="button" aria-label="Scroll right" className="ml-auto flex w-3 items-center justify-center border-l border-[#8a8a8a]">
                    <svg viewBox="0 0 6 6" className="size-[6px]" aria-hidden="true"><path d="M2 .8L4.200 3 2 5.200" fill="none" stroke="#333" /></svg>
                  </button>
                </div>
              )}
            </div>
            <div className="min-w-0 flex-1 border-l border-[#8f8f8f] bg-[#fdfdfd] pt-px">
              <RecordTable rows={second ? LIST2 : LIST1} timestamps={second} />
            </div>
          </div>
          <div className={`flex shrink-0 justify-end border-t-2 border-[#6f6f6f] bg-[#fcfcfc] ${second ? 'h-4' : 'h-[15px]'}`}>
            <span className="w-[89px] border-l border-[#a8a8a8]" />
            <span className="w-[58px] border-l border-[#a8a8a8]" />
          </div>
        </div>
        <VmTaskbar second={second} />
        {!second && <NewHostDialog />}
        {!second && (
          <svg viewBox="0 0 7 13" className="pointer-events-none absolute top-[235px] left-[306px] h-[13px] w-[7px]" aria-hidden="true">
            <path d="M1 .5h2M4 .5h2M3.500 1v11M1 12.500h2M4 12.500h2" fill="none" stroke="#333" strokeWidth="1" />
          </svg>
        )}
      </main>

      <footer className="flex h-[21px] shrink-0 items-center border-b border-[#c2c2c2] bg-[#f0f0f0] pr-[2px] pl-[3px]">
        <span className="w-[117px] border-r border-[#7d7d7d] font-['Lato'] text-[10px] leading-[18px] whitespace-nowrap text-[#1f1f1f]">Status: Wird ausgeführt</span>
        <div className="ml-auto flex items-center gap-px">
          <S size="size-[17px]">
            <path d="M.8 1h10.400v9.800H.8z" fill="#e9e9e9" stroke="#5e5e5e" strokeWidth="1" />
            <path d="M2 8.500V6l1.500-1h5L10 6v2.500z" fill="#b8b8b8" stroke="#4f4f4f" strokeWidth=".8" />
            <path d="M3 6.800h6M1.200 2.800h9.600" stroke="#5e5e5e" strokeWidth=".8" />
          </S>
          <S size="size-[17px]">
            <path d="M3.600 1h4.800l1.800 8.500-1.800 1.800H3.600L1.800 9.500z" fill="#777" stroke="#555" strokeWidth=".8" />
            <path d="M6 2.500l1.200 2.500 1.300 3.500q-2.500 3-5 0L4.800 5z" fill="#f4f4f4" stroke="#444" strokeWidth=".5" />
          </S>
          <S size="size-[16px]">
            <path d="M3.400 5.500V3.300a2.600 2.600 0 0 1 5.200 0v2.200" fill="none" stroke="#6f5c22" strokeWidth="1.600" />
            <path d="M.8 5.200h10.400v6.400H.8z" fill="#a2852f" stroke="#5f4d17" strokeWidth=".8" />
            <path d="M4.600 6.800h3M4.600 8.300h3M4.600 9.800h3" stroke="#ddc572" strokeWidth=".8" />
          </S>
          <svg viewBox="0 0 10 10" className="mt-2 size-[9px]" aria-hidden="true">
            <path d="M7 1h1.500v1.500H7zM7 4h1.500v1.500H7zM4 4h1.500v1.500H4zM7 7h1.500v1.500H7zM4 7h1.500v1.500H4zM1 7h1.500v1.500H1z" fill="#8a8a8a" />
          </svg>
        </div>
      </footer>
    </section>
  );
}

/* ---------- desktop ---------- */

function Wallpaper() {
  return (
    <svg viewBox="0 0 1280 720" preserveAspectRatio="none" className="absolute inset-0 h-full w-full" aria-hidden="true">
      <defs>
        <linearGradient id="burnt" x1="0" x2="1" y1="0" y2=".3">
          <stop offset="0" stopColor="#d2891f" />
          <stop offset=".45" stopColor="#c87c1c" />
          <stop offset=".8" stopColor="#b96818" />
          <stop offset="1" stopColor="#8e4f18" />
        </linearGradient>
        <linearGradient id="cream" x1="0" x2="1">
          <stop offset="0" stopColor="#f3e1c8" />
          <stop offset=".3" stopColor="#eee1d0" />
          <stop offset="1" stopColor="#f1e3da" />
        </linearGradient>
        <linearGradient id="sun" x1="0" x2="1">
          <stop offset="0" stopColor="#f5bd25" />
          <stop offset="1" stopColor="#f2b838" />
        </linearGradient>
      </defs>
      <path d="M0 0h1280v720H0z" fill="#e89612" />
      <path d="M0 560h110L58 720H0z" fill="#e2a039" />
      <path d="M521 602h122l-18 118H372z" fill="url(#burnt)" />
      <path d="M643 602h70v118h-88z" fill="#77603a" />
      <path d="M688 470h592v250H713L688 602z" fill="url(#cream)" />
      <path d="M685 0h10v493h-10z" fill="#f3b60f" />
      <path d="M926 602h354v118h-80z" fill="#eca51a" />
      <path d="M950 602h330v118h-58z" fill="url(#sun)" />
      <path d="M926 602l274 118" stroke="#b98a4a" strokeWidth="1" />
    </svg>
  );
}

function TrayIcons() {
  const i = 'size-[14px]';
  return (
    <div className="flex items-center gap-[6px]">
      <S size={i}><path d="M1 2l3-1 2 2 2-2 3 1-2 3 2 3-3 3H4L1 8l2-3z" fill="#8fc3e6" /><path d="M4 4l4 4M8 4L4 8" stroke="#fff" /></S>
      <S size={i}><path d="M1 1h9v9H1z" fill="#2c8fd6" /><circle cx="5.500" cy="5.500" r="3.300" fill="#eef6fc" /><path d="M3.500 5.500h4" stroke="#1361ad" strokeWidth="1.200" /><path d="M6 8.500h6v3H6z" fill="#46b23a" /></S>
      <Nvidia size="size-[14px]" />
      <S size={i}><path d="M.5 9.500C.5 6.500 3 6 4 6c1-3 4.500-3 5 0 2 0 3 1.500 2.700 3.500z" fill="#1c4ba0" /><path d="M4 6.500c1-2 3-2.500 4.500-1" stroke="#7ea9e0" fill="none" /></S>
      <S size={i}><path d="M1 1.500h6v4H1zM2 11l3-5 2 3" fill="#b8c1c7" stroke="#dfe5e8" strokeWidth=".8" /><circle cx="8.500" cy="3.800" r="2.900" fill="#c8283a" /></S>
      <S size={i}><path d="M6 .8L11.200 6 6 11.200.8 6z" fill="#5f7d86" stroke="#b6cdd3" strokeWidth=".8" /><path d="M6 3.500L8.500 6 6 8.500 3.500 6z" fill="none" stroke="#d8e6ea" strokeWidth=".8" /></S>
      <S size={i}><path d="M2 2h8v8H2z" fill="#61685a" /><path d="M9.500 4A4 4 0 1 0 9.500 8.500M9.500 2v3H7" fill="none" stroke="#6fb35f" strokeWidth="1.300" /></S>
      <Outlook size="size-[14px]" />
      <S size={i}><path d="M1 5h4v1.500H1z" fill="#cfcfcf" /><path d="M5 7l2 2 3-5v6H7z" fill="#77a86c" /></S>
      <S size={i}><ellipse cx="6" cy="6" rx="4.600" ry="5.600" fill="#163d6e" stroke="#4b7fb8" strokeWidth=".5" /><path d="M3.800 4l4.400 4L6 10V2l2.200 2-4.400 4" fill="none" stroke="#fff" strokeWidth=".9" /></S>
      <S size={i}><path d="M5.500 2h5v9.500h-5z" fill="#fff" /><path d="M7 1h2v1H7z" fill="#fff" /><path d="M2.200 1v3M.8 4h3M2.200 4v7M2.200 11h3" stroke="#fff" fill="none" /></S>
      <S size={i}><path d="M3.800 3h7.600v5.500H3.800M7.500 8.500v2.300M5 11h5" fill="none" stroke="#fff" /><path d="M.6 1.500h3v2.500h-3zM2 4v7h2" fill="none" stroke="#fff" strokeWidth=".8" /></S>
      <S size={i}><path d="M1.500 4h1.800L6.600 1v10L3.300 8H1.500z" fill="#fff" /><path d="M8.300 4v4M10.300 4.500v3" stroke="#ddd" strokeWidth=".9" /></S>
      <S size={i}><path d="M1.500 1v10.500" stroke="#fff" strokeWidth="1.200" /><path d="M2 1.200h5v1.400h4.500L9.800 5l1.400 2H6.500V5.800H2z" fill="#fff" /></S>
    </div>
  );
}

function DesktopTaskbar() {
  const apps: { label: string; icon: ReactNode; stacked?: boolean; active?: boolean }[] = [
    { label: 'PowerShell', icon: <PowerShell screen /> },
    { label: 'Hyper-V Manager', icon: <HyperV /> },
    { label: 'Chrome', icon: <Chrome />, stacked: true },
    { label: 'Control Panel', icon: <ControlPanel /> },
    { label: 'File Explorer', icon: <Explorer />, stacked: true },
    { label: 'NVIDIA', icon: <Nvidia /> },
    { label: 'Evernote', icon: <Evernote /> },
    { label: 'TeamViewer', icon: <TeamViewer /> },
    { label: 'Outlook', icon: <Outlook /> },
    { label: 'Virtual Machine Connection', icon: <VmConnect />, stacked: true, active: true },
  ];
  return (
    <nav className="relative flex h-8 shrink-0 items-center bg-linear-to-r from-[#73532f] via-[#77603a] via-52% to-[#6f6440]">
      <div className="absolute inset-y-0 right-[80px] left-[55%] bg-linear-to-r from-[#6d685b] via-[#6d685b] via-75% to-[#6f6440]" />
      <button type="button" aria-label="Start" className="flex h-full w-10 shrink-0 items-center justify-center"><WinLogo size="size-6" /></button>
      <div className="relative flex h-full gap-[2px]">
        {apps.map((a) => (
          <div key={a.label} className="flex h-full w-[47px] shrink-0">
            <button
              type="button"
              aria-label={a.label}
              className={`flex h-full w-11 items-center justify-center border ${
                a.active ? 'border-[#cfc2a3] bg-[#8b7f68]' : 'border-[#b4935d] bg-[#75603f]'
              }`}
            >
              {a.icon}
            </button>
            {a.stacked && <span className={`w-[2px] border-r ${a.active ? 'border-[#cfc2a3]' : 'border-[#b4935d]'}`} />}
          </div>
        ))}
      </div>
      <div className="relative ml-auto flex items-center gap-[13px] pr-4">
        <TrayIcons />
        <time className="text-center text-[9px] leading-[14px] text-white">
          21:03
          <br />
          30.03.2014
        </time>
      </div>
    </nav>
  );
}

export default function App() {
  return (
    <div className="relative flex h-screen min-h-[634px] flex-col overflow-hidden bg-[#e89612] font-['Open_Sans',sans-serif]">
      <Wallpaper />
      <div className="relative flex-1 overflow-hidden">
        <VmWindow second />
        <VmWindow />
      </div>
      <DesktopTaskbar />
    </div>
  );
}
